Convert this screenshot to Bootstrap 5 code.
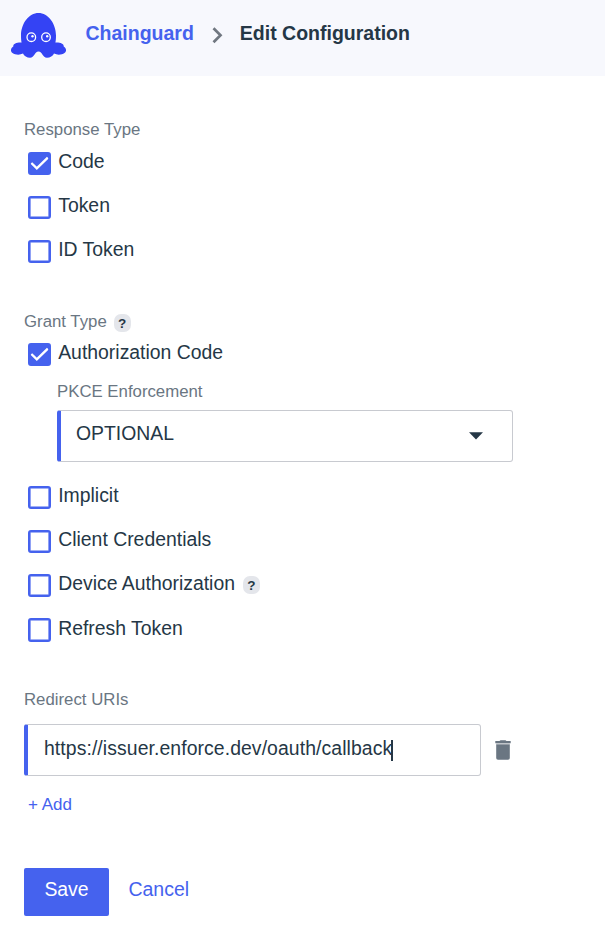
<!DOCTYPE html>
<html lang="en">
<head>
<meta charset="utf-8">
<meta name="viewport" content="width=device-width, initial-scale=1">
<title>Edit Configuration</title>
<link rel="stylesheet" href="https://cdn.jsdelivr.net/npm/bootstrap@5.3.0/dist/css/bootstrap.min.css">
<style>
body{font-family:"Liberation Sans",Arial,sans-serif;font-size:19.4px;line-height:24px;color:#253746;background:#fff}
svg{display:block;flex:none}
a,.btn-link{color:#4562ee;text-decoration:none}
.topbar{height:76px;background:#f7f8fd;padding-left:11px;font-size:19.5px}
.topbar svg.logo{margin-top:13px}
.topbar .crumb{margin-top:21px}
.crumb a{margin-left:19.5px}
.crumb svg{margin:4px 15px 0 17px}
.page{padding:42px 24px 0}
.caption{font-size:16.8px;line-height:24px;color:#6a7682;display:block}
.check-row{height:44.2px;padding:0 0 0 4px;margin:0}
.check-row .form-check-input{width:23.4px;height:23.4px;margin:2.7px 6.8px 0 0;flex:none;border:2px solid #4562ee;box-shadow:inset 0 0 0 .6px #4562ee;border-radius:3px;background-color:#fff;float:none}
.check-row .form-check-input:checked{background-color:#4562ee;background-origin:border-box;background-size:100%;background-position:center;background-image:url("data:image/svg+xml,%3csvg xmlns='http://www.w3.org/2000/svg' viewBox='0 0 24 24'%3e%3cpath fill='none' stroke='%23fff' stroke-width='2.5' d='M3.5 11.5l5.7 5.6L20.7 5.8'/%3e%3c/svg%3e")}
.help{width:17px;height:18px;border-radius:7px;background:#e4e6eb;color:#253746;font-size:13.5px;line-height:19px;font-weight:700;text-align:center;flex:none}
.field{height:52px;border:1px solid #c8cad0;border-left:4px solid #4562ee;border-radius:3px;padding:10px 15px 0;color:#253746}
.pick{width:456px;margin-top:5.5px}
.uri{width:457px;padding:11px 15px 0 16px;letter-spacing:.08px}
.caret{width:2px;height:21px;background:#253746;margin-top:4px;margin-left:-1px}
.btn-save{width:85px;height:48px;background:#4562ee;color:#fff;border:0;border-radius:2px;font-size:19.4px;line-height:24px;padding:0 0 6px}
.btn-cancel{font-size:19.5px;line-height:24px;padding:0;height:42px;margin-left:19.4px;border:0}
.sec-response{height:192px}
.response-caption{height:31px}
.sec-grant{height:378px}
.grant-head{height:30px}
.grant-head .help{margin:4px 0 0 7px}
.check-row .help{margin:5px 0 0 8px}
.auth-row{height:40px}
.pkce{margin-left:33px;height:103px}
.drop{margin:11px 14px 0 0}
.uri-line{margin-top:12px}
.trash{margin-left:14px}
.add{font-size:17px;line-height:24px;margin:17px 0 0 4px}
.sec-uris{height:180px}
</style>
<script src="https://cdn.jsdelivr.net/npm/bootstrap@5.3.0/dist/js/bootstrap.bundle.min.js"></script>
</head>
<body>
<header class="topbar d-flex align-items-start">
  <svg class="logo" width="55" height="45" viewBox="0 0 55 45">
    <path fill="#3443f4" d="M27.500 0C18 0 10 10.500 10 22.500C10 25.500 10.200 28 10.600 29.600C6 29.300 2 30.500 2.300 33.500C-.8 35.500-.5 38.500 1.500 40C4 41.800 8.500 42.300 12 40.600C13 43 16 44.800 19 44.800C23.500 44.800 23.500 38.500 27.500 38.500C31.500 38.500 31.500 44.800 36 44.800C39 44.800 42 43 43 40.600C46.500 42.300 51 41.800 53.500 40C55.500 38.500 55.800 35.500 52.700 33.500C53 30.500 49 29.300 44.400 29.600C44.800 28 45 25.500 45 22.500C45 10.500 37 0 27.500 0Z"/>
    <g fill="none" stroke="#fff" stroke-width="1.300"><circle cx="20.300" cy="24.200" r="4.300"/><circle cx="35" cy="24.200" r="4.300"/></g>
    <g fill="#fff"><circle cx="21.500" cy="23.200" r="1.200"/><circle cx="36.200" cy="23.200" r="1.200"/></g>
  </svg>
  <nav class="crumb d-flex fw-bold" aria-label="breadcrumb">
    <a href="#">Chainguard</a>
    <svg width="14" height="20" viewBox="0 0 14 20"><path d="M2.500 3.200l7 7-7 7" fill="none" stroke="#707780" stroke-width="2.700"/></svg>
    <span>Edit Configuration</span>
  </nav>
</header>
<main class="page">
  <section class="sec-response">
    <span class="caption response-caption">Response Type</span>
    <label class="check-row d-flex align-items-start"><input class="form-check-input" type="checkbox" checked><span>Code</span></label>
    <label class="check-row d-flex align-items-start"><input class="form-check-input" type="checkbox"><span>Token</span></label>
    <label class="check-row d-flex align-items-start"><input class="form-check-input" type="checkbox"><span>ID Token</span></label>
  </section>
  <section class="sec-grant">
    <div class="grant-head d-flex"><span class="caption">Grant Type</span><span class="help">?</span></div>
    <label class="check-row auth-row d-flex align-items-start"><input class="form-check-input" type="checkbox" checked><span>Authorization Code</span></label>
    <div class="pkce">
      <span class="caption">PKCE Enforcement</span>
      <div class="field pick d-flex justify-content-between align-items-start" role="combobox">
        <span>OPTIONAL</span>
        <svg class="drop" width="14" height="8" viewBox="0 0 14 8"><path fill="#253746" d="M0 .3h14L7 7.500z"/></svg>
      </div>
    </div>
    <label class="check-row d-flex align-items-start"><input class="form-check-input" type="checkbox"><span>Implicit</span></label>
    <label class="check-row d-flex align-items-start"><input class="form-check-input" type="checkbox"><span>Client Credentials</span></label>
    <label class="check-row d-flex align-items-start"><input class="form-check-input" type="checkbox"><span>Device Authorization</span><span class="help">?</span></label>
    <label class="check-row d-flex align-items-start"><input class="form-check-input" type="checkbox"><span>Refresh Token</span></label>
  </section>
  <section class="sec-uris">
    <span class="caption">Redirect URIs</span>
    <div class="uri-line d-flex align-items-center">
      <div class="field uri d-flex align-items-start" role="textbox"><span>https://issuer.enforce.dev/oauth/callback</span><span class="caret"></span></div>
      <svg class="trash" width="16" height="20" viewBox="0 0 16 20"><path fill="#6a7682" d="M.3 1h4.200l1-.8h5l1 .8h4.200v2.300H.3z"/><path fill="#b5bac1" d="M1.200 3.300h13.600v1.500H1.200z"/><path fill="#6a7682" d="M1.200 4.600h13.600V18a1.800 1.800 0 0 1-1.800 1.800H3A1.800 1.800 0 0 1 1.200 18z"/></svg>
    </div>
    <a class="add d-inline-block" href="#">+ Add</a>
  </section>
  <div class="actions d-flex align-items-start">
    <button class="btn btn-save" type="button">Save</button>
    <button class="btn btn-link btn-cancel" type="button">Cancel</button>
  </div>
</main>
</body>
</html>
